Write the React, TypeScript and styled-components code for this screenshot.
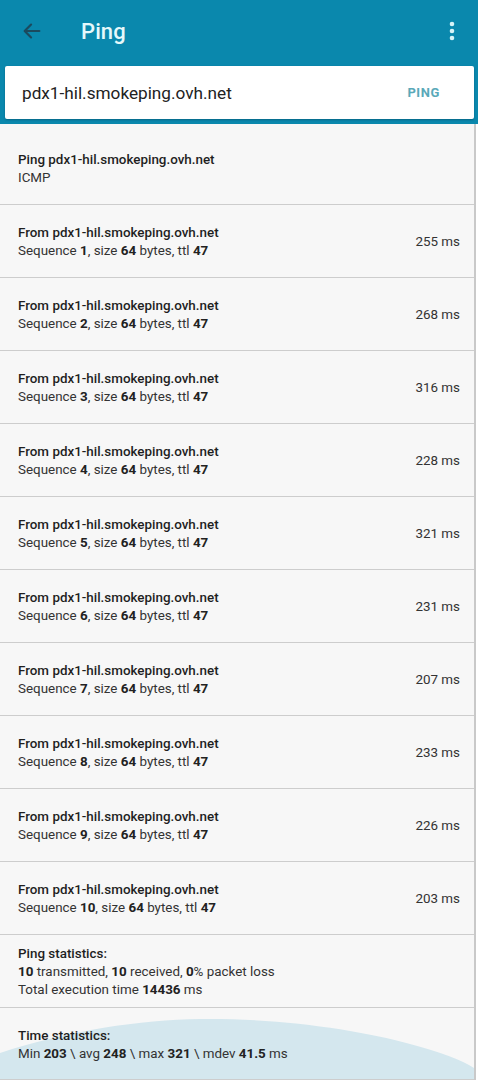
import React from 'react'
import styled, { createGlobalStyle } from 'styled-components'

const GlobalStyle = createGlobalStyle`
    html, body {
        margin: 0;
        padding: 0;
        background: #ffffff;
    }
    body {
        font-family: Roboto, "Noto Sans", Arial, sans-serif;
        -webkit-font-smoothing: antialiased;
    }
`

const Screen = styled.div`
    width: 478px;
    height: 1080px;
    overflow: hidden;
    background: #ffffff;
`

const TopArea = styled.header`
    background-color: #0a88ad;
    padding-bottom: 5px;
`

const Toolbar = styled.div`
    height: 62px;
    display: flex;
    align-items: center;
    padding: 0 14px 0 20px;
`

const IconButton = styled.button`
    width: 24px;
    height: 24px;
    padding: 0;
    border: none;
    background: none;
    display: flex;
    align-items: center;
    justify-content: center;
`

const Title = styled.h1`
    flex: 1;
    margin: 0 0 0 37px;
    font-size: 22px;
    font-weight: 500;
    color: #e6f8fb;
    letter-spacing: 0.1px;
`

const SearchCard = styled.div`
    margin: 4px 4px 0 5px;
    height: 53px;
    background: #ffffff;
    border-radius: 2px;
    box-shadow: 0 1px 2px rgba(0, 40, 60, 0.35);
    display: flex;
    align-items: center;
    padding: 0 34px 0 17px;
`

const HostInput = styled.div`
    flex: 1;
    font-size: 17.2px;
    color: #222222;
`

const PingButton = styled.span`
    font-size: 13px;
    font-weight: 700;
    color: #5aa9b9;
    letter-spacing: 0.6px;
`

const List = styled.section`
    width: 474px;
    border-right: 2px solid #c9c9c9;
    background: #f7f7f7;
`

const Row = styled.div<{ $height: number; $top?: number }>`
    position: relative;
    height: ${(p) => p.$height}px;
    box-sizing: border-box;
    border-bottom: 1px solid #cdcdcd;
    display: flex;
    align-items: center;
    padding: ${(p) => p.$top ?? 2}px 14px 0 18px;
    overflow: hidden;
`

const RowText = styled.div`
    position: relative;
    flex: 1;
    z-index: 1;
`

const Line = styled.div<{ $strong?: boolean }>`
    font-size: 13.4px;
    line-height: 18px;
    color: ${(p) => (p.$strong ? '#1f1f1f' : '#333333')};
    font-weight: ${(p) => (p.$strong ? 500 : 400)};
    white-space: nowrap;

    b {
        font-weight: 700;
        color: #222222;
    }
`

const Time = styled.div`
    font-size: 13.4px;
    line-height: 18px;
    color: #333333;
`

const Wave = styled.svg`
    position: absolute;
    left: 0;
    top: 0;
    width: 474px;
    height: 72px;
`

const host = 'pdx1-hil.smokeping.ovh.net'
const times = [255, 268, 316, 228, 321, 231, 207, 233, 226, 203]

export default function App() {
    return (
        <Screen>
            <GlobalStyle />
            <TopArea>
                <Toolbar>
                    <IconButton aria-label="back">
                        <svg width="22" height="22" viewBox="0 0 24 24" fill="none" stroke="#1b4a5e" strokeWidth="2.4" strokeLinecap="round" strokeLinejoin="round">
                            <path d="M20 12H4.5" />
                            <path d="M11 5l-7 7 7 7" />
                        </svg>
                    </IconButton>
                    <Title>Ping</Title>
                    <IconButton aria-label="menu">
                        <svg width="6" height="20" viewBox="0 0 6 20" fill="#d6f3f7">
                            <circle cx="3" cy="3" r="2.3" />
                            <circle cx="3" cy="10" r="2.3" />
                            <circle cx="3" cy="17" r="2.3" />
                        </svg>
                    </IconButton>
                </Toolbar>
                <SearchCard>
                    <HostInput>{host}</HostInput>
                    <PingButton>PING</PingButton>
                </SearchCard>
            </TopArea>

            <List>
                <Row $height={81} $top={9}>
                    <RowText>
                        <Line $strong>Ping {host}</Line>
                        <Line>ICMP</Line>
                    </RowText>
                </Row>
                {times.map((ms, i) => (
                    <Row key={i} $height={73}>
                        <RowText>
                            <Line $strong>From {host}</Line>
                            <Line>
                                Sequence <b>{i + 1}</b>, size <b>64</b> bytes, ttl <b>47</b>
                            </Line>
                        </RowText>
                        <Time>{ms} ms</Time>
                    </Row>
                ))}
                <Row $height={73}>
                    <RowText>
                        <Line $strong>Ping statistics:</Line>
                        <Line>
                            <b>10</b> transmitted, <b>10</b> received, <b>0</b>% packet loss
                        </Line>
                        <Line>
                            Total execution time <b>14436</b> ms
                        </Line>
                    </RowText>
                </Row>
                <Row $height={72}>
                    <Wave viewBox="0 0 474 72" preserveAspectRatio="none">
                        <path d="M0 45 C 70 22, 140 12, 200 11 C 280 10, 360 22, 410 36 C 440 44, 462 52, 474 60 L474 80 L0 80 Z" fill="#d4e7ee" />
                    </Wave>
                    <RowText>
                        <Line $strong>Time statistics:</Line>
                        <Line>
                            Min <b>203</b> \ avg <b>248</b> \ max <b>321</b> \ mdev <b>41.5</b> ms
                        </Line>
                    </RowText>
                </Row>
            </List>
        </Screen>
    )
}
